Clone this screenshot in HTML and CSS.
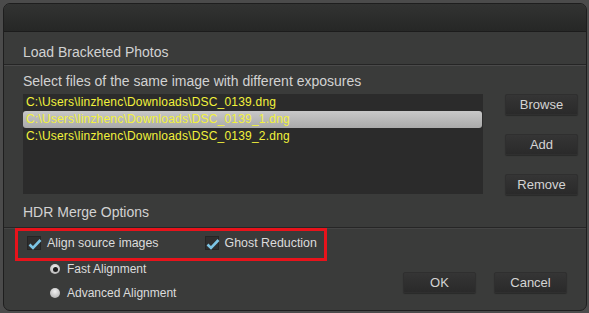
FILE: index.html
```html
<!DOCTYPE html>
<html lang="en">
<head>
    <title>Load Bracketed Photos</title>
    <link rel="stylesheet" href="styles.css">
</head>
<body>
    <div class="dialog">
        <div class="titlebar"></div>

        <div class="section-head">Load Bracketed Photos</div>

        <div class="files">
            <div class="hint">Select files of the same image with different exposures</div>
            <div class="files-row">
                <ul class="file-list">
                    <li>C:\Users\linzhenc\Downloads\DSC_0139.dng</li>
                    <li class="selected">C:\Users\linzhenc\Downloads\DSC_0139_1.dng</li>
                    <li>C:\Users\linzhenc\Downloads\DSC_0139_2.dng</li>
                </ul>
                <div class="side-buttons">
                    <button class="btn">Browse</button>
                    <button class="btn">Add</button>
                    <button class="btn">Remove</button>
                </div>
            </div>
            <div class="hdr-title">HDR Merge Options</div>
        </div>

        <div class="options">
            <div class="highlight">
                <label class="check"><span class="box"><svg width="14" height="12" viewBox="0 0 14 12"><path d="M1.5 6.5 L5 10 L12.5 2" fill="none" stroke="#7cc4e4" stroke-width="2.6"/></svg></span>Align source images</label>
                <label class="check"><span class="box"><svg width="14" height="12" viewBox="0 0 14 12"><path d="M1.5 6.5 L5 10 L12.5 2" fill="none" stroke="#7cc4e4" stroke-width="2.6"/></svg></span>Ghost Reduction</label>
            </div>
            <div class="bottom-row">
                <div class="radios">
                    <label class="radio"><span class="dot on"></span>Fast Alignment</label>
                    <label class="radio"><span class="dot"></span>Advanced Alignment</label>
                </div>
                <div class="actions">
                    <button class="btn">OK</button>
                    <button class="btn">Cancel</button>
                </div>
            </div>
        </div>
    </div>
</body>
</html>
```

FILE: styles.css
```css
body {
    margin: 0;
    background: #4b4b4b;
    font-family: 'Liberation Sans', Arial, sans-serif;
    color: #d6d6d6;
    padding: 3px 2px 0 3px;
    height: 313px;
    box-sizing: border-box;
    overflow: hidden;
}

.dialog {
    height: 308px;
    background: #3a3b3a;
    border: 1px solid #1e1e1e;
    border-radius: 7px;
    overflow: hidden;
    box-sizing: border-box;
}

/* Title bar */
.titlebar {
    height: 27px;
    background: linear-gradient(#323332, #262726);
    border-bottom: 1px solid #1c1c1c;
}

.section-head {
    height: 32px;
    line-height: 40px;
    padding-left: 19px;
    font-size: 14px;
    color: #d2d2d2;
    border-bottom: 1px solid #252525;
    box-shadow: 0 1px 0 #4a4a4a;
}

.files {
    padding: 7px 0 0 19px;
}

.hint {
    font-size: 14px;
    height: 22px;
    line-height: 18px;
    color: #d2d2d2;
}

.files-row {
    display: flex;
}

.file-list {
    list-style: none;
    margin: 0;
    padding: 0;
    width: 460px;
    height: 100px;
    box-sizing: border-box;
    background: #2b2b2b;
    font-size: 12px;
    letter-spacing: 0.2px;
}

.file-list li {
    height: 17px;
    line-height: 17px;
    padding-left: 3px;
    color: #f2f23c;
}

.file-list li.selected {
    background: linear-gradient(#c8c8c8, #aaaaaa);
    border-radius: 3px;
    margin-right: 1px;
}

.side-buttons {
    display: flex;
    flex-direction: column;
    gap: 19px;
    margin-left: 22px;
}

.btn {
    width: 73px;
    height: 21px;
    padding: 0;
    background: linear-gradient(#353535, #2a2a2a);
    border: 1px solid #2f2f2f;
    border-radius: 2px;
    box-shadow: 0 1px 1px rgba(0, 0, 0, 0.3);
    color: #d4d4d4;
    font-family: 'Liberation Sans', Arial, sans-serif;
    font-size: 13px;
}

.hdr-title {
    height: 32px;
    line-height: 34px;
    font-size: 14px;
    color: #d2d2d2;
}

.options {
    border-top: 1px solid #262626;
    box-shadow: inset 0 1px 0 #454545;
    padding-left: 11px;
}

.highlight {
    display: flex;
    gap: 46px;
    width: 312px;
    height: 33px;
    box-sizing: border-box;
    border: 3px solid #e8131b;
    padding: 1px 0 0 9px;
    font-size: 12.4px;
}

.check {
    display: flex;
    align-items: center;
    gap: 6px;
    height: 22px;
    color: #dcdcdc;
}

.box {
    width: 14px;
    height: 14px;
    background: #2e2e2e;
    border: 1px solid #252525;
    box-sizing: border-box;
    position: relative;
}

.box svg {
    position: absolute;
    left: 0;
    top: 1px;
}

.bottom-row {
    display: flex;
    justify-content: space-between;
}

.radios {
    display: flex;
    flex-direction: column;
    gap: 4px;
    padding: 0 0 0 35px;
    margin-top: -2px;
    font-size: 12px;
}

.radio {
    display: flex;
    align-items: center;
    gap: 7px;
    height: 20px;
    color: #dcdcdc;
}

.dot {
    width: 10px;
    height: 10px;
    border-radius: 50%;
    background: radial-gradient(circle at 50% 35%, #f0f0f0, #a8a8a8);
    box-sizing: border-box;
    position: relative;
}

.dot.on::after {
    content: "";
    position: absolute;
    left: 2.5px;
    top: 2.5px;
    width: 5px;
    height: 5px;
    border-radius: 50%;
    background: #1c1c1c;
}

.actions {
    display: flex;
    gap: 18px;
    padding: 11px 19px 0 0;
}
```
